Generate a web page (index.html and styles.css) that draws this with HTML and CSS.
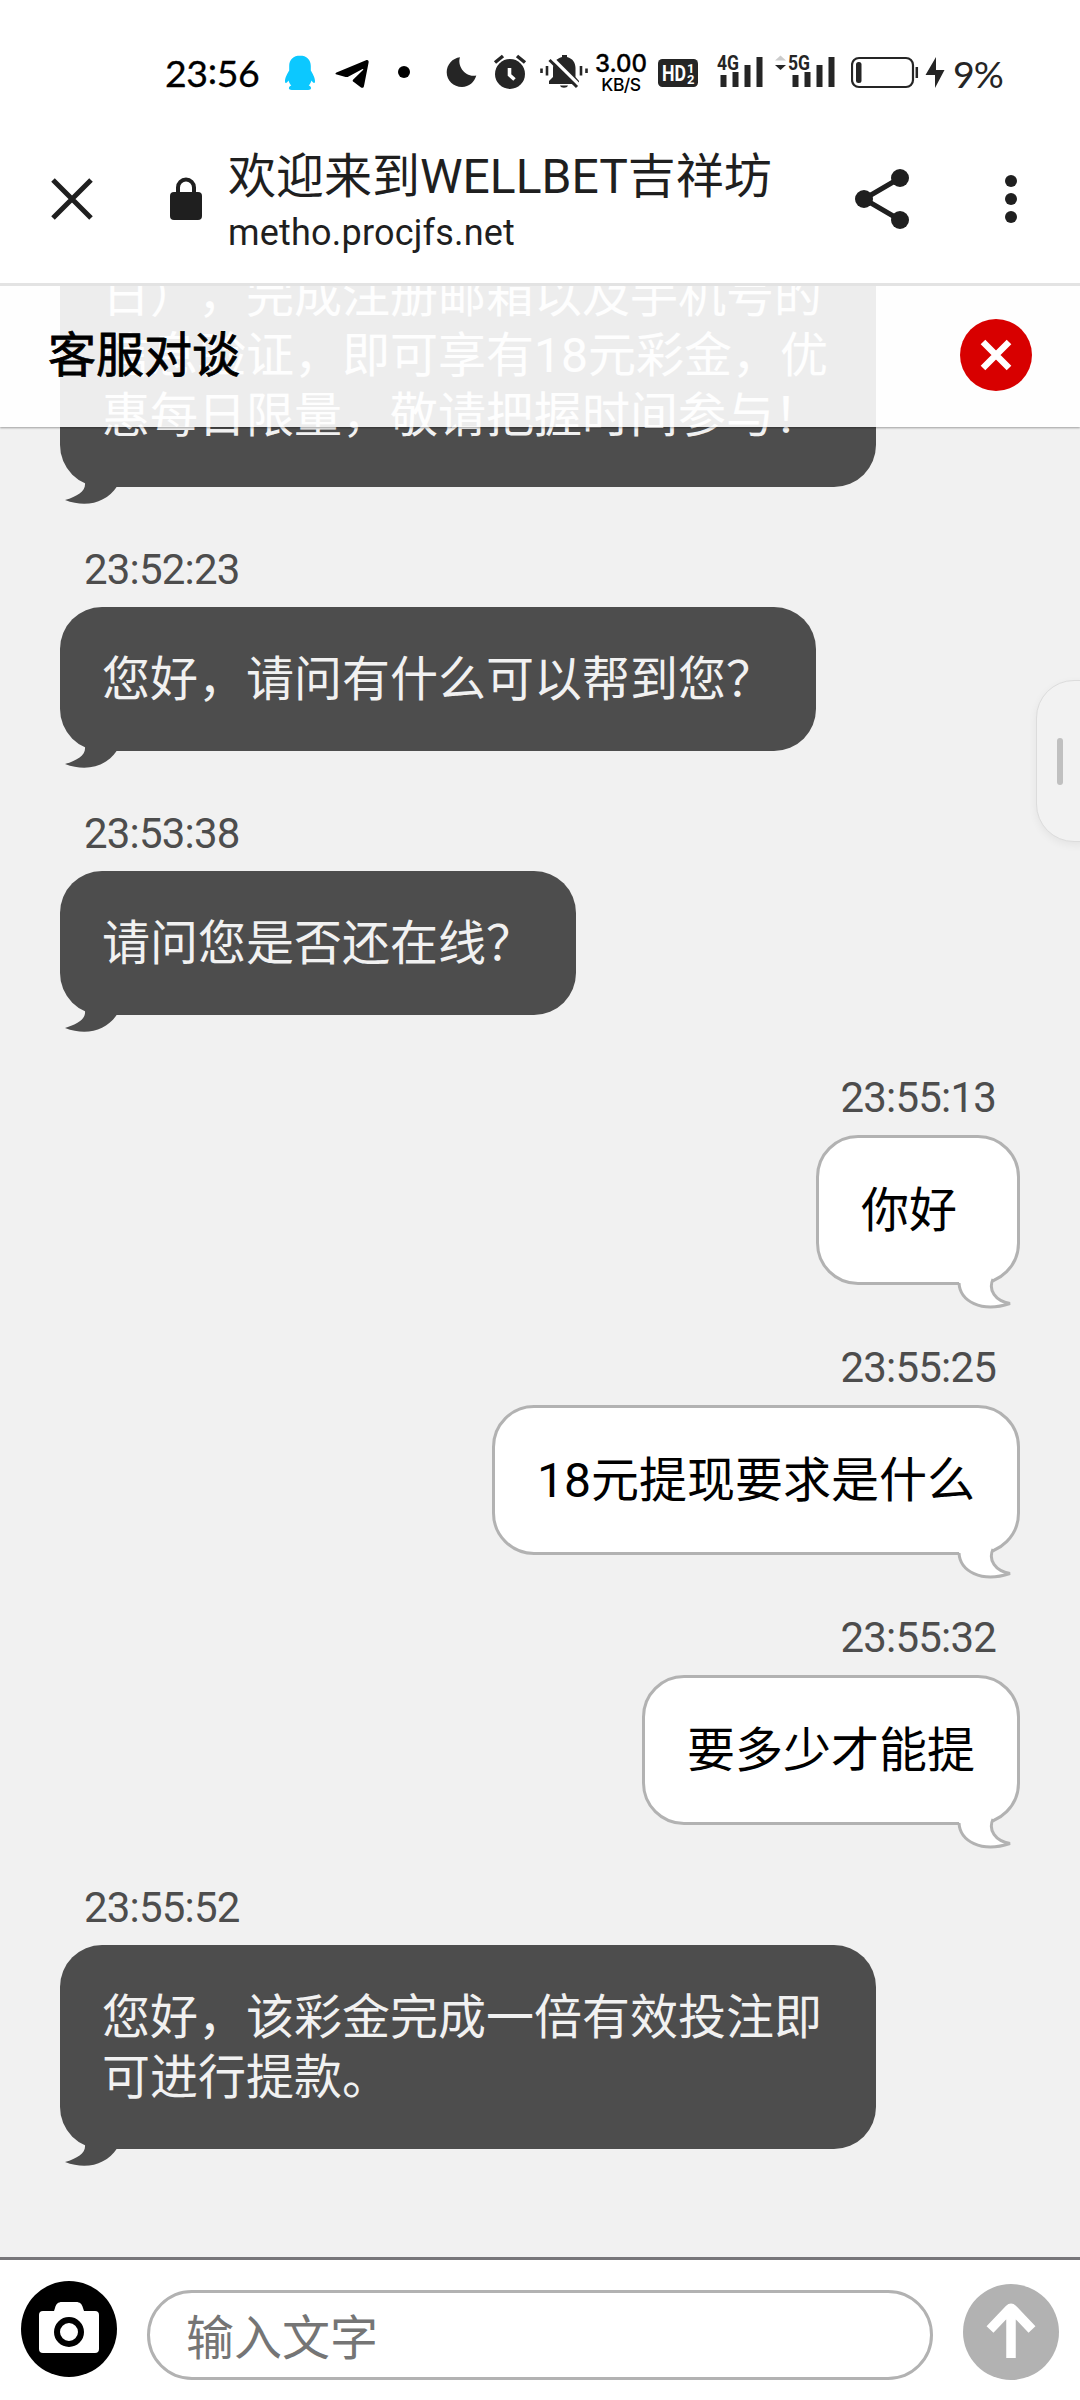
FILE: index.html
```html
<!DOCTYPE html>
<html lang="zh-CN">
<head>
<meta charset="utf-8">
<title>欢迎来到WELLBET吉祥坊</title>
<link rel="stylesheet" href="styles.css">
</head>
<body>
<div class="status">
  <span class="clock">23<span class="colon">:</span>56</span>
  <svg class="ic qq" width="32" height="44" viewBox="284 50 32 44"><path fill="#0cc8ff" d="M300 55.500c-6.500 0-10.800 4.500-10.800 10.500v4.500c-1.500 2.500-4.200 7-4.200 10.500 0 3 1.800 2.500 3.500-.5.600 2 1.500 3.700 2.800 5-3.500 1.500-3 4.500.5 4.500h16.400c3.500 0 4-3 .5-4.500 1.300-1.300 2.200-3 2.800-5 1.700 3 3.500 3.500 3.500.5 0-3.500-2.700-8-4.200-10.500V66c0-6-4.300-10.500-10.800-10.500z"/></svg>
  <svg class="ic tg" width="36" height="44" viewBox="334 50 36 44"><path d="M336.500 72.500 366 60.200c1.800-.7 3 .3 2.600 2.200l-4.600 23.500c-.4 2-1.700 2.500-3.300 1.300l-6.900-5.100c-1.400-1-1.500-1.800-.3-2.900l9.500-9.300c.8-.8 0-1.200-.9-.6l-13.500 7.200c-1 .6-2 .7-3 .4l-8.800-2.300c-1.700-.5-1.700-1.500-.3-2.100z"/></svg>
  <svg class="ic dot" width="14" height="44" viewBox="397 50 14 44"><circle cx="404" cy="72" r="6"/></svg>
  <svg class="ic moon" width="32" height="44" viewBox="445 50 32 44"><path fill="#252525" d="M460 57.200c-3 8.500 5 20.500 16.300 18.300C474.500 82 469 87 462 87c-8.500 0-15.300-6.500-15.300-14.700 0-7.800 5.800-14.200 13.300-15.100z"/></svg>
  <svg class="ic alarm" width="34" height="44" viewBox="493 50 34 44"><circle cx="510" cy="74" r="15" fill="#252525"/><path d="m495 62.500 8-6.500m22 6.500-8-6.500" stroke="#252525" stroke-width="3.500"/><path d="M509.500 68v7l5 4.500" fill="none" stroke="#fff" stroke-width="3.600"/></svg>
  <svg class="ic bell" width="50" height="44" viewBox="539 50 50 44"><path fill="#252525" d="M562 57v-2h5v2c6 1.500 8.500 6 8.500 11v9l3.500 4v3h-30v-3l4-4v-9c0-5 3-9.500 9-11zM560 85.500h8c-1 3-7 3-8 0z"/><path d="m552 58 27 27" stroke="#fff" stroke-width="3.500"/><path d="m549.500 60 27.500 27" stroke="#252525" stroke-width="3"/><path d="M541.500 68.500v4.500M547 66v9.500M581 66v9.500M586.500 68.500v4.500" stroke="#252525" stroke-width="2.600"/></svg>
  <span class="speed"><b>3.00</b><small>KB/S</small></span>
  <svg class="ic hd" width="40" height="44" viewBox="658 50 40 44"><rect x="658" y="59" width="40" height="28" rx="4.500" fill="#252525"/><text class="t-hd" x="662" y="81" textLength="24" lengthAdjust="spacingAndGlyphs">HD</text><text class="t-sub" x="687" y="73">1</text><text class="t-sub" x="687" y="84">2</text></svg>
  <svg class="ic g4" width="47" height="44" viewBox="716 50 47 44"><text class="t-g" x="717" y="70" textLength="22" lengthAdjust="spacingAndGlyphs">4G</text><path d="M723.500 75v12M735.500 72v15M747.500 65v22M759.500 57v30" stroke="#252525" stroke-width="6"/></svg>
  <svg class="ic g5" width="60" height="44" viewBox="775 50 60 44"><path fill="#ccc" d="m775 60.500 5.500-5 5.500 5z"/><path fill="#252525" d="m775 65 5.500 5 5.500-5z"/><text class="t-g" x="788" y="70" textLength="22" lengthAdjust="spacingAndGlyphs">5G</text><path d="M795.500 75v12M807.500 72v15M819.500 65v22M831.500 57v30" stroke="#252525" stroke-width="6"/></svg>
  <svg class="ic bat" width="68" height="44" viewBox="851 50 68 44"><rect x="852" y="58" width="61" height="29" rx="7" fill="none" stroke="#252525" stroke-width="2.200"/><rect x="856" y="62" width="5.500" height="21" rx="2.500" fill="#252525"/><path d="M916.800 67v11" stroke="#252525" stroke-width="2.500"/></svg>
  <svg class="ic bolt" width="20" height="44" viewBox="925 50 20 44"><path fill="#252525" d="M936 57v13h8.500L935 88V75h-9.500z"/></svg>
  <span class="pct">9%</span>
</div>
<div class="toolbar">
  <svg class="x" width="42" height="42" viewBox="0 0 42 42"><path d="m2 2 38 38M40 2 2 40" stroke="#1f1f1f" stroke-width="5"/></svg>
  <svg class="lock" width="32" height="44" viewBox="0 0 32 44"><rect y="15" width="32" height="28" rx="4" fill="#1f1f1f"/><path d="M8 17v-6.500a8 8 0 0 1 16 0V17" fill="none" stroke="#1f1f1f" stroke-width="4"/></svg>
  <div class="page">
    <div class="title">欢迎来到WELLBET吉祥坊</div>
    <div class="url">metho.procjfs.net</div>
  </div>
  <svg class="share" width="54" height="60" viewBox="0 0 54 60"><path d="M45 9 9 30l36 21" fill="none" stroke="#1f1f1f" stroke-width="5"/><g fill="#1f1f1f"><circle cx="45" cy="9" r="9"/><circle cx="9" cy="30" r="9"/><circle cx="45" cy="51" r="9"/></g></svg>
  <svg class="more" width="12" height="48" viewBox="0 0 12 48"><g fill="#1f1f1f"><circle cx="6" cy="6" r="6"/><circle cx="6" cy="24" r="6"/><circle cx="6" cy="42" r="6"/></g></svg>
</div>
<main class="chat">
  <header class="head">
    <h1>客服对谈</h1>
    <svg width="72" height="72" viewBox="0 0 72 72"><circle cx="36" cy="36" r="36" fill="#d80000"/><path d="m23 23 26 26m0-26L23 49" stroke="#fff" stroke-width="6.500"/></svg>
  </header>
  <div class="list">
    <div class="msg in"><div class="bubble">日），完成注册邮箱以及手机号的<br>信息验证，即可享有18元彩金，优<br>惠每日限量，敬请把握时间参与！<svg class="tail" width="56" height="34" viewBox="0 0 56 34"><path d="M20 0v9.500C21 18 13 23 0 27c21 8 41 3 52-13.500V0z"/></svg></div></div>
    <div class="msg in"><time>23:52:23</time><div class="bubble">您好，请问有什么可以帮到您？<svg class="tail" width="56" height="34" viewBox="0 0 56 34"><path d="M20 0v9.500C21 18 13 23 0 27c21 8 41 3 52-13.500V0z"/></svg></div></div>
    <div class="msg in"><time>23:53:38</time><div class="bubble">请问您是否还在线？<svg class="tail" width="56" height="34" viewBox="0 0 56 34"><path d="M20 0v9.500C21 18 13 23 0 27c21 8 41 3 52-13.500V0z"/></svg></div></div>
    <div class="msg out"><time>23:55:13</time><div class="bubble">你好<svg class="tail" width="58" height="40" viewBox="0 0 58 40"><path class="fill" d="M2 12c1 19 22 31 51 21C38 31 32 21 36 9L30 4H4z"/><path class="line" d="M2 13c1 18 22 30 51 20.500C38 31 31 20 36 9"/></svg></div></div>
    <div class="msg out"><time>23:55:25</time><div class="bubble">18元提现要求是什么<svg class="tail" width="58" height="40" viewBox="0 0 58 40"><path class="fill" d="M2 12c1 19 22 31 51 21C38 31 32 21 36 9L30 4H4z"/><path class="line" d="M2 13c1 18 22 30 51 20.500C38 31 31 20 36 9"/></svg></div></div>
    <div class="msg out"><time>23:55:32</time><div class="bubble">要多少才能提<svg class="tail" width="58" height="40" viewBox="0 0 58 40"><path class="fill" d="M2 12c1 19 22 31 51 21C38 31 32 21 36 9L30 4H4z"/><path class="line" d="M2 13c1 18 22 30 51 20.500C38 31 31 20 36 9"/></svg></div></div>
    <div class="msg in"><time>23:55:52</time><div class="bubble">您好，该彩金完成一倍有效投注即<br>可进行提款。<svg class="tail" width="56" height="34" viewBox="0 0 56 34"><path d="M20 0v9.500C21 18 13 23 0 27c21 8 41 3 52-13.500V0z"/></svg></div></div>
  </div>
  <div class="handle"></div>
</main>
<footer class="composer">
  <svg class="cam" width="96" height="96" viewBox="0 0 96 96"><circle cx="48" cy="48" r="48"/><path fill="#fff" d="M22 30h11l1-3c1-4 3-6 7-6h14c4 0 6 2 7 6l1 3h11q4 0 4 4v34q0 4-4 4H22q-4 0-4-4V34q0-4 4-4z"/><circle cx="48" cy="51" r="12" fill="#fff" stroke="#000" stroke-width="6"/></svg>
  <div class="field">输入文字</div>
  <svg class="send" width="96" height="96" viewBox="0 0 96 96"><circle cx="48" cy="48" r="48" fill="#b2b2b2"/><path d="M48 74V28M27 45.500 46.500 25q1.500-1.500 3 0L69 45.500" fill="none" stroke="#fff" stroke-width="9.500"/></svg>
</footer>
</body>
</html>
```
FILE: styles.css
```css
* { box-sizing: border-box; }
body {
  margin: 0;
  width: 1080px;
  height: 2400px;
  overflow: hidden;
  display: flex;
  flex-direction: column;
  background: #fff;
  font-family: Roboto, "Noto Sans CJK SC", sans-serif;
  text-spacing-trim: space-all;
}
svg { display: block; flex: none; }

.status { display: flex; height: 94px; padding: 50px 0 0 165px; flex: none; }
.clock { width: 119px; height: 44px; font: 37.5px/45px Lato, sans-serif; letter-spacing: -.4px; -webkit-text-stroke: .3px #000; white-space: nowrap; }
.colon { position: relative; top: -3px; }
.tg { margin-left: 18px; }
.dot { margin-left: 27px; }
.moon { margin-left: 34px; }
.alarm { margin-left: 16px; }
.bell { margin-left: 12px; }
.speed { width: 52px; margin-left: 6px; display: flex; flex-direction: column; align-items: center; }
.speed b { font: 500 24px/27px Inter, sans-serif; height: 25px; -webkit-text-stroke: .3px #000; }
.speed small { font: 500 17.500px/19px Inter, sans-serif; letter-spacing: -.5px; }
.hd { margin-left: 11px; }
.g4 { margin-left: 18px; }
.g5 { margin-left: 12px; }
.bat { margin-left: 16px; }
.bolt { margin-left: 6px; }
.pct { margin-left: 8px; font: 37.5px/47px Lato, sans-serif; color: #252525; letter-spacing: -1px; white-space: nowrap; }
.t-hd { font: 700 22px Roboto, sans-serif; fill: #fff; }
.t-sub { font: 700 13px Roboto, sans-serif; fill: #fff; }
.t-g { font: 700 21px Roboto, sans-serif; fill: #252525; }

.toolbar {
  display: flex;
  align-items: center;
  height: 192px;
  padding: 20px 63px 0 51px;
  border-bottom: 3px solid #e3e3e3;
  flex: none;
  color: #1f1f1f;
}
.lock { margin-left: 77px; }
.page { flex: 1; margin-left: 26px; padding-top: 8px; }
.title { font-size: 48px; line-height: 56px; white-space: nowrap; }
.url { padding-top: 4px; font-size: 36px; line-height: 48px; letter-spacing: .2px; }
.share { margin-right: 96px; }

.chat { position: relative; flex: 1; min-height: 0; overflow: hidden; background: #f1f1f1; }
.head {
  position: absolute;
  inset: 0 0 auto;
  z-index: 2;
  height: 141px;
  padding: 0 48px;
  display: flex;
  align-items: center;
  justify-content: space-between;
  background: rgba(255, 255, 255, .9);
  box-shadow: 0 1px 2px rgba(0, 0, 0, .35);
}
.head h1 { margin: -2px 0 0; font-size: 48px; font-weight: 400; line-height: 60px; -webkit-text-stroke: .8px #000; }
.head svg { margin-top: -4px; }
.list {
  height: 100%;
  padding: 0 60px 108px;
  display: flex;
  flex-direction: column;
  justify-content: flex-end;
}
.msg { display: flex; flex-direction: column; flex: none; }
.msg.in { align-items: flex-start; }
.msg.out { align-items: flex-end; }
.msg time {
  height: 120px;
  padding: 58px 24px 0;
  font-size: 42px;
  line-height: 50px;
  letter-spacing: -.8px;
  color: #4d4d4d;
}
.bubble {
  position: relative;
  min-width: 204px;
  padding: 43px 42px 41px;
  border-radius: 42px;
  font-size: 48px;
  line-height: 60px;
  white-space: nowrap;
}
.in .bubble { background: #4d4d4d; color: #f1f1f1; }
.in .bubble:has(br) { width: 816px; }
.out .bubble { background: #fff; color: #000; border: 3px solid #b2b2b2; }
.tail { position: absolute; }
.in .tail { left: 5px; bottom: -20px; fill: #4d4d4d; }
.out .tail { right: 2px; bottom: -28px; }
.tail .fill { fill: #fff; }
.tail .line { fill: none; stroke: #b2b2b2; stroke-width: 3; }
.handle {
  position: absolute;
  top: 394px;
  right: -6px;
  width: 50px;
  height: 162px;
  padding: 57px 0 0 20px;
  border: 1px solid #dcdcdc;
  border-radius: 38px 0 0 38px;
  background: #f2f2f2;
  box-shadow: 0 3px 8px rgba(0, 0, 0, .06);
}
.handle::before { content: ""; display: block; width: 6px; height: 47px; border-radius: 3px; background: #c0c0c0; }

.composer {
  display: flex;
  align-items: flex-start;
  height: 143px;
  padding: 21px 21px 0;
  border-top: 3px solid #77767a;
  background: #fff;
  flex: none;
}
.field {
  flex: 1;
  height: 90px;
  margin: 9px 30px 0;
  padding: 0 36px;
  border: 3px solid #b2b2b2;
  border-radius: 45px;
  font-size: 48px;
  line-height: 91px;
  color: #757575;
}
.send { margin-top: 3px; }
```
